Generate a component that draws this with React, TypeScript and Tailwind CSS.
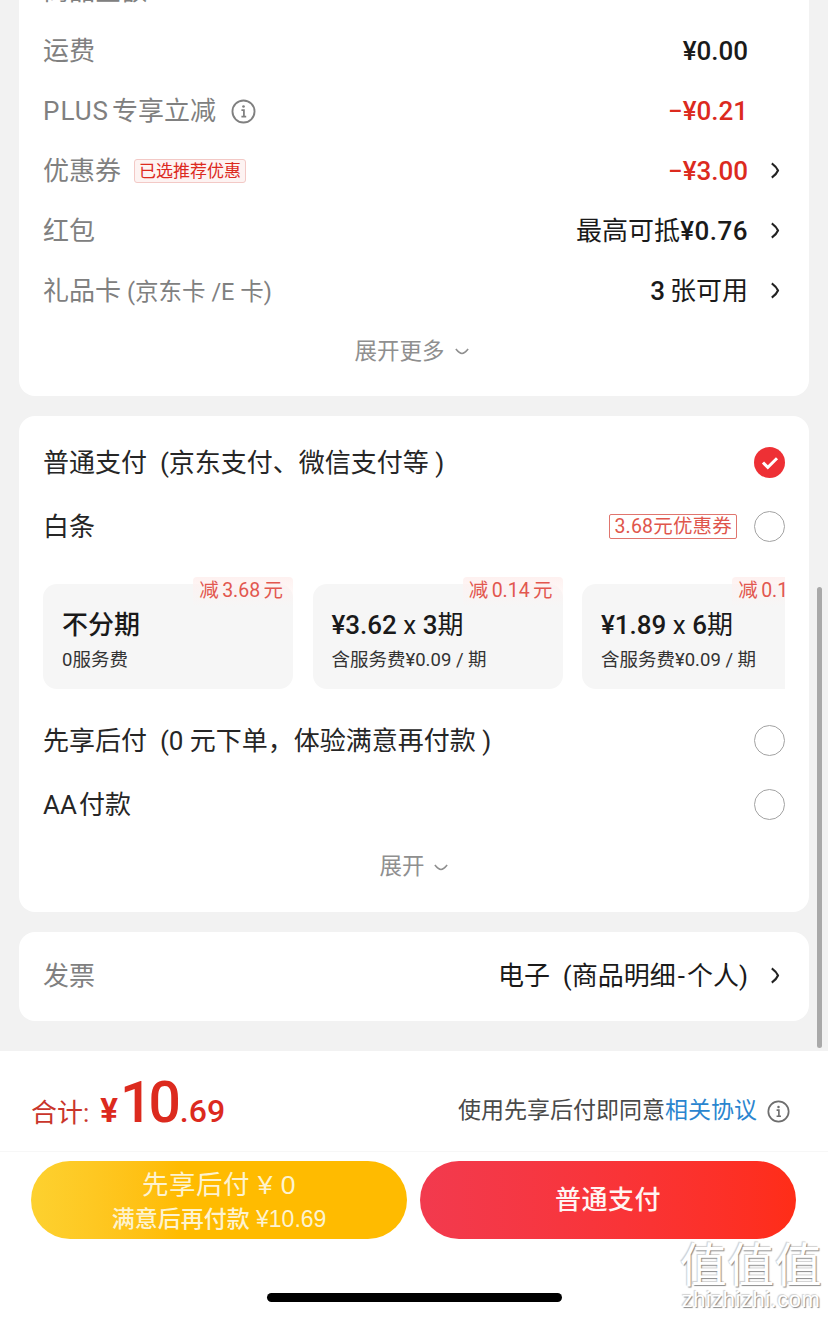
const InfoIcon = ({ className }: { className: string }) => (
  <svg viewBox="0 0 24 24" className={className} fill="none" stroke="currentColor">
    <circle cx="12" cy="12" r="10.6" strokeWidth="1.8" />
    <path d="M10 10.6h2.4v6.2M10 17h4.6" strokeWidth="1.7" />
    <circle cx="12" cy="7.2" r="1.3" fill="currentColor" stroke="none" />
  </svg>
);

const Chevron = () => (
  <svg viewBox="0 0 10 18" className="mb-[2px] h-[17px] w-[10px] text-[#222]" fill="none" stroke="currentColor" strokeWidth="2.2">
    <path d="M1.6 1.4C4.6 3.6 7 6.2 8.2 9 7 11.8 4.6 14.4 1.6 16.6" />
  </svg>
);

const SmallDown = () => (
  <svg viewBox="0 0 16 8" className="h-[7px] w-[16px]" fill="none" stroke="currentColor" strokeWidth="1.8">
    <path d="M1 1.2C4 5 6 6.2 8 6.2S12 5 15 1.2" />
  </svg>
);

const Radio = () => <div className="size-[31px] rounded-full border-[1.5px] border-[#a3a3a3] bg-white" />;

const Checked = () => (
  <div className="flex size-[31px] items-center justify-center rounded-full bg-[#ee3035]">
    <svg viewBox="0 0 20 16" className="h-[14px] w-[18px]" fill="none" stroke="white" strokeWidth="3.4">
      <path d="M2 7.5 7.5 13 18 2.5" />
    </svg>
  </div>
);

const FeeRow = ({ label, extra, value, red, arrow }: {
  label: React.ReactNode;
  extra?: React.ReactNode;
  value: React.ReactNode;
  red?: boolean;
  arrow?: boolean;
}) => (
  <div className="flex h-[60px] items-center">
    <span className="text-[26px] text-[#808080]">{label}</span>
    {extra}
    <div className="ml-auto flex items-center">
      <span className={`text-[26px] ${red ? "text-[#dc2a1e]" : "text-[#1a1a1a]"}`}>{value}</span>
      <div className="flex w-[33px] justify-end pr-[1px]">{arrow && <Chevron />}</div>
    </div>
  </div>
);

const PlanCard = ({ title, titleBold, sub, off }: { title: React.ReactNode; titleBold?: boolean; sub: string; off: string }) => (
  <div className="relative h-[105px] w-[250px] shrink-0 rounded-[14px] bg-[#f6f6f6] pl-[19px] pt-[23px]">
    <div className="absolute right-0 top-[-7px] h-[30px] rounded-[4px] bg-gradient-to-b from-[#fef1f0] to-transparent pl-[6px] pr-[10px] text-[19.5px] leading-[28px] text-[#e2574f] [word-spacing:-1.5px]">{off}</div>
    <div className={`text-[26px] leading-[36px] text-[#1a1a1a] ${titleBold ? "font-medium" : ""}`}>{title}</div>
    <div className="mt-[3px] text-[18.5px] leading-[28px] text-[#333]">{sub}</div>
  </div>
);

const PayRow = ({ label, right }: { label: React.ReactNode; right: React.ReactNode }) => (
  <div className="flex h-[64px] items-center justify-between">
    <span className="whitespace-pre text-[26px] text-[#262626]">{label}</span>
    <div className="mb-[1px] flex items-center">{right}</div>
  </div>
);

export default function App() {
  return (
    <div className="relative flex h-[1317px] w-[828px] flex-col overflow-hidden bg-[#f2f2f2] font-['Roboto','Noto_Sans_CJK_SC',sans-serif]">
      <div className="flex h-[1051px] shrink-0 flex-col gap-[20px] overflow-hidden px-[19px]">
        <div className="mt-[-39px] rounded-[16px] bg-white pb-[15px] pl-[24px] pr-[28px]">
          <FeeRow label="商品金额" value={<span className="font-medium">¥13.90</span>} />
          <FeeRow label="运费" value={<span className="font-medium">¥0.00</span>} />
          <FeeRow
            label={<><span className="mr-[3px] tracking-[1px]">PLUS</span>专享立减</>}
            value={<span className="font-medium">−¥0.21</span>}
            red
            extra={<InfoIcon className="ml-[15px] size-[25px] text-[#808080]" />}
          />
          <FeeRow
            label="优惠券"
            value={<span className="font-medium">−¥3.00</span>}
            red
            arrow
            extra={
              <span className="ml-[13px] rounded-[3px] border border-[#f3c9c6] bg-[#fdf3f2] px-[4px] text-[17px] leading-[22px] text-[#dc2a1e]">已选推荐优惠</span>
            }
          />
          <FeeRow label="红包" value={<>最高可抵<span className="font-medium tracking-[0.5px]">¥0.76</span></>} arrow />
          <FeeRow
            label={<>礼品卡<span className="ml-[6px] text-[23.5px]">(京东卡 /E 卡)</span></>}
            value={<><span className="mr-[5px] font-medium">3</span>张可用</>}
            arrow
          />
          <div className="flex h-[60px] items-center justify-center gap-[9px] pt-[1px] text-[22.5px] text-[#8f8f8f]">
            展开更多
            <SmallDown />
          </div>
        </div>

        <div className="rounded-[16px] bg-white px-[24px] pb-[17px] pt-[15px]">
          <PayRow label={"普通支付  (京东支付、微信支付等 )"} right={<Checked />} />
          <PayRow
            label="白条"
            right={
              <>
                <span className="mr-[17px] rounded-[2px] border border-[#e0756e] px-[4px] text-[19.5px] leading-[23px] tracking-[0.2px] text-[#e0564c]">3.68元优惠券</span>
                <Radio />
              </>
            }
          />
          <div className="mt-[25px] flex gap-[19.5px] overflow-x-clip overflow-y-visible">
            <PlanCard title="不分期" titleBold sub="0服务费" off="减 3.68 元" />
            <PlanCard
              title={<><span className="font-medium">¥3.62</span> x <span className="font-medium">3</span>期</>}
              sub="含服务费¥0.09 / 期"
              off="减 0.14 元"
            />
            <PlanCard
              title={<><span className="font-medium">¥1.89</span> x <span className="font-medium">6</span>期</>}
              sub="含服务费¥0.09 / 期"
              off="减 0.14 元"
            />
          </div>
          <div className="mt-[20px]">
            <PayRow label={"先享后付  (0 元下单，体验满意再付款 )"} right={<Radio />} />
            <PayRow label={<><span className="mr-[2px]">AA</span>付款</>} right={<Radio />} />
          </div>
          <div className="flex h-[58px] items-center justify-center gap-[8px] pt-[2px] text-[22.5px] text-[#8f8f8f]">
            展开
            <SmallDown />
          </div>
        </div>

        <div className="flex h-[89px] shrink-0 items-center rounded-[16px] bg-white pl-[24px] pr-[28px]">
          <span className="text-[26px] text-[#808080]">发票</span>
          <span className="ml-auto whitespace-pre text-[26px] text-[#1a1a1a]">电子  (商品明细<span className="mx-[2px]">-</span>个人)</span>
          <div className="flex w-[33px] justify-end pr-[1px]"><Chevron /></div>
        </div>
      </div>

      <div className="flex flex-1 flex-col bg-white">
        <div className="flex h-[101px] items-center justify-between border-b border-[#f7f7f7] pl-[31px] pr-[38px]">
          <div className="mt-[6px] flex items-baseline text-[#dc2a1e]">
            <span className="text-[26px] text-[#c9352b]">合计:</span>
            <span className="ml-[11px] text-[33px] font-bold">¥</span>
            <span className="ml-[2px] text-[57px] leading-[60px] font-medium tracking-[-4px]">10</span>
            <span className="ml-[3px] text-[32px] font-medium">.69</span>
          </div>
          <div className="mt-[20px] flex items-center">
            <span className="text-[23px] text-[#4a4a4a]">使用先享后付即同意</span>
            <span className="text-[23px] text-[#2a85cf]">相关协议</span>
            <InfoIcon className="ml-[10px] size-[23px] text-[#6e6e6e]" />
          </div>
        </div>
        <div className="flex gap-[13px] px-[31px] pt-[9px]">
          <button className="flex h-[78px] w-[376px] flex-col items-center justify-center rounded-full bg-gradient-to-r from-[#fdd12f] from-0% to-[#ffbb00] to-[40%] font-['Liberation_Sans','Noto_Sans_CJK_SC',sans-serif] text-[#fdf3d0]">
            <span className="text-[26.5px] leading-[38px] tracking-[0.5px]">先享后付 ¥ 0</span>
            <span className="text-[23px] leading-[30px] font-medium">满意后再付款 ¥10.69</span>
          </button>
          <button className="h-[78px] w-[376px] rounded-full bg-gradient-to-r from-[#f23a4e] to-[#ff2d17] text-[26px] font-medium tracking-[0.5px] text-[#fff4f2]">普通支付</button>
        </div>
        <div className="mx-auto mt-[54px] h-[9px] w-[295px] rounded-full bg-black" />
      </div>

      {/* scrollbar, sits over the cards */}
      <div className="absolute left-[817px] top-[587px] h-[461px] w-[5px] rounded-full bg-[#a9a9a9]" />

      {/* watermark */}
      <div className="absolute left-[677px] top-[1236px] w-[148px] text-center font-['Noto_Sans_CJK_SC',sans-serif] text-white [text-shadow:1px_1px_1px_#8a8a8a,-1px_-1px_1px_#d0d0d0]">
        <div className="text-[47px] leading-[52px] tracking-[0.5px]">值值值</div>
        <div className="mt-[1px] font-['Liberation_Sans',sans-serif] text-[22px] leading-[22px] tracking-[0.5px]">zhizhizhi.com</div>
      </div>
    </div>
  );
}
